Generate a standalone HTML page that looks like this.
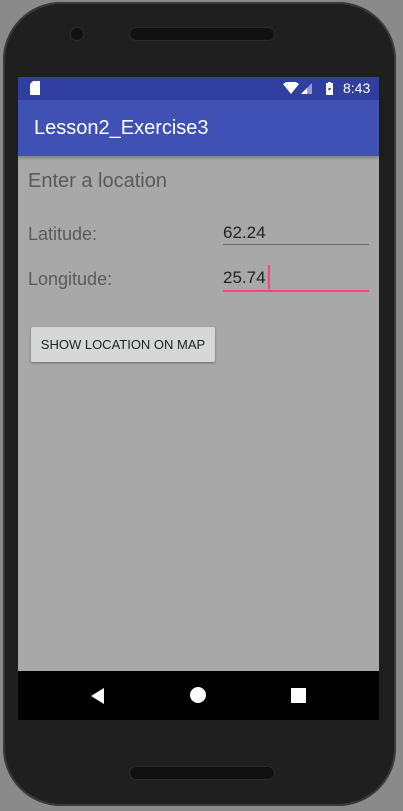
<!DOCTYPE html>
<html><head><style>
body{margin:0;width:403px;height:811px;background:#8a8a8a;position:relative;overflow:hidden;font-family:"Liberation Sans",sans-serif}
.phone{position:absolute;left:3px;top:2px;width:393px;height:804px;background:#1f1f1f;border-radius:58px;box-shadow:inset 0 0 0 2px #3a3a3a}
.spk{position:absolute;left:127px;width:144px;height:12px;border-radius:6px;background:#111;box-shadow:0 0 0 1px #2a2a2a}
.cam{position:absolute;left:68px;top:26px;width:12px;height:12px;border-radius:50%;background:#121212;box-shadow:0 0 0 1px #2c2c2c}
.abs{position:absolute}
.screen{position:absolute;left:18px;top:77px;width:361px;height:643px;background:#a8a8a8}
.sb{position:absolute;left:0;top:0;width:361px;height:23px;background:#303f9f;color:#fff}
.ab{position:absolute;left:0;top:23px;width:361px;height:56px;background:#3f51b5;box-shadow:0 2px 3px rgba(0,0,0,.25)}
.nav{position:absolute;left:0;top:594px;width:361px;height:49px;background:#000}
</style></head><body>
<div class="phone">
<div class="cam"></div>
<div class="spk" style="top:26px"></div>
<div class="spk" style="top:765px"></div>
</div>
<div class="screen">
<div class="sb">
<svg class="abs" style="left:12px;top:4px" width="10" height="14"><path d="M3 0H10V14H0V3Z" fill="#fff"/></svg>
<svg class="abs" style="left:265px;top:5px" width="52" height="14"><path d="M0 2Q8-4 16 2L8 12Z" fill="#fff"/><path d="M29 1V12H18Z" fill="#fff" opacity=".5"/><path d="M24 6V12H18Z" fill="#fff"/><rect x="43" y="1" width="7" height="12" fill="#fff"/><rect x="45" y="0" width="3" height="2" fill="#fff"/><path d="M47 3L45 8H47L46 11L48 6H46Z" fill="#303f9f"/></svg>
<div class="abs" style="left:325px;top:3px;font-size:14px">8:43</div>
</div>
<div class="ab"><div class="abs" style="left:16px;top:17px;color:#fff;font-size:20px">Lesson2_Exercise3</div></div>
<div class="abs" style="left:10px;top:93px;font-size:20px;color:#5a5a5a">Enter a location</div>
<div class="abs" style="left:10px;top:147px;font-size:18px;color:#5a5a5a">Latitude:</div>
<div class="abs" style="left:205px;top:146px;font-size:17px;color:#222">62.24</div>
<div class="abs" style="left:205px;top:167px;width:146px;height:1px;background:#6a6a6a"></div>
<div class="abs" style="left:10px;top:192px;font-size:18px;color:#5a5a5a">Longitude:</div>
<div class="abs" style="left:205px;top:191px;font-size:17px;color:#222">25.74</div>
<div class="abs" style="left:250px;top:188px;width:2px;height:24px;background:#ff4081"></div>
<div class="abs" style="left:205px;top:213px;width:146px;height:2px;background:#ff4081"></div>
<div class="abs" style="left:13px;top:250px;width:184px;height:35px;background:#d6d7d7;border-radius:2px;box-shadow:0 1px 2px rgba(0,0,0,.35);font-size:13px;color:#222;text-align:center;line-height:35px">SHOW LOCATION ON MAP</div>
<div class="nav">
<svg class="abs" style="left:72px;top:16px" width="16" height="18"><path d="M14 1V17L1 9Z" fill="#fff"/></svg>
<div class="abs" style="left:172px;top:16px;width:16px;height:16px;border-radius:50%;background:#fff"></div>
<div class="abs" style="left:273px;top:17px;width:15px;height:15px;background:#fff"></div>
</div>
</div>
</body></html>
